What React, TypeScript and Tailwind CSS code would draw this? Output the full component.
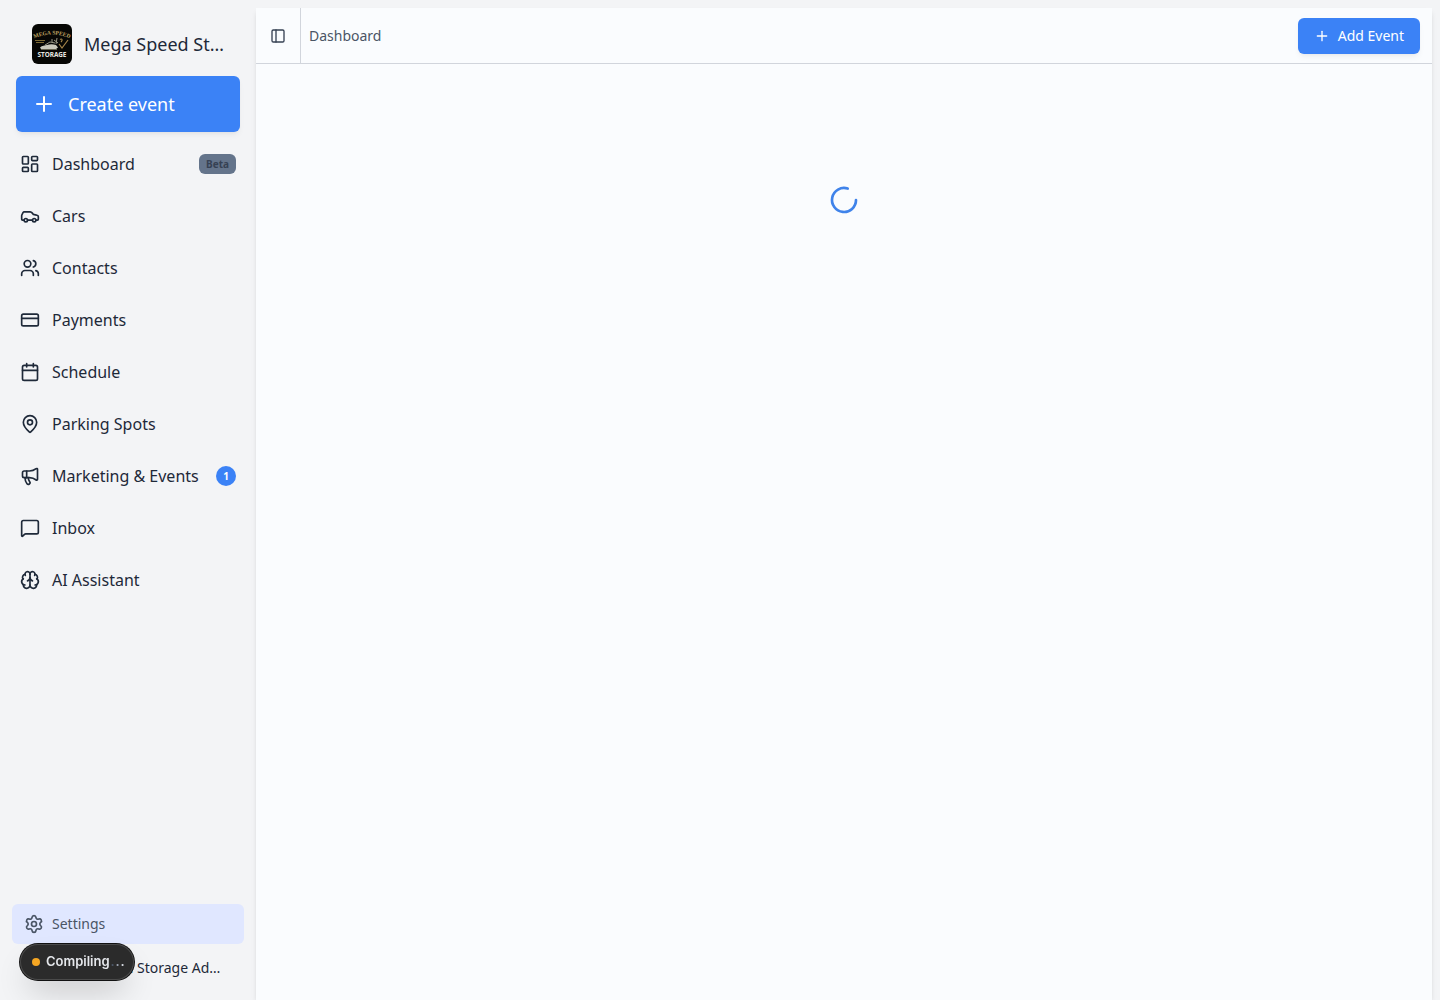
import {
  Brain,
  Calendar,
  Car,
  CreditCard,
  LayoutDashboard,
  MapPin,
  Megaphone,
  MessageSquare,
  PanelLeft,
  Plus,
  Settings,
  Users,
  type LucideIcon,
} from "lucide-react";

interface NavItem {
  label: string;
  icon: LucideIcon;
  href: string;
  tag?: string;
  count?: number;
}

const NAV_ITEMS: NavItem[] = [
  { label: "Dashboard", icon: LayoutDashboard, href: "#dashboard", tag: "Beta" },
  { label: "Cars", icon: Car, href: "#cars" },
  { label: "Contacts", icon: Users, href: "#contacts" },
  { label: "Payments", icon: CreditCard, href: "#payments" },
  { label: "Schedule", icon: Calendar, href: "#schedule" },
  { label: "Parking Spots", icon: MapPin, href: "#parking-spots" },
  { label: "Marketing & Events", icon: Megaphone, href: "#marketing", count: 1 },
  { label: "Inbox", icon: MessageSquare, href: "#inbox" },
  { label: "AI Assistant", icon: Brain, href: "#assistant" },
];

function Logo() {
  return (
    <svg viewBox="0 0 40 40" className="size-10 shrink-0 rounded-md" role="img" aria-label="Mega Speed Storage">
      <rect width="40" height="40" fill="#070705" />
      <path id="logo-arc" d="M1 15 Q20 6 39 15" fill="none" />
      <text fontFamily="Liberation Serif, serif" fontSize="5.6" fontWeight="700" fill="#c2a766" textAnchor="middle">
        <textPath href="#logo-arc" startOffset="50%">
          MEGA SPEED
        </textPath>
      </text>
      <path d="M3 16.5h10M4 18.5h8" stroke="#7d6a35" strokeWidth="1.2" />
      <path d="M8 23.5c2-2 5-2 7-2.5 3-1 6-1 9 0l2 2.5-2 1.5H9z" fill="#c9c7ba" />
      <path d="M13 21l5-3 5 1M20 18v-3M24 20l1-6M22 16l4 3" stroke="#989684" strokeWidth="1" fill="none" />
      <path d="M28 15.5c2-1.5 3 .5 1 2.5M27 20l3 4 6-8" stroke="#a48449" strokeWidth="1.2" fill="none" />
      <path d="M9 25.5h16" stroke="#65624f" strokeWidth="1" />
      <text
        x="20"
        y="33"
        fontFamily="Noto Sans, sans-serif"
        fontSize="6.4"
        fontWeight="700"
        fill="#e9e8e2"
        textAnchor="middle"
      >
        STORAGE
      </text>
    </svg>
  );
}

function NavLink({ item }: { item: NavItem }) {
  const Icon = item.icon;

  return (
    <a href={item.href} className="flex h-10 items-center gap-3 rounded-md px-2 hover:bg-indigo-100">
      <Icon className="size-5 shrink-0" />
      <span className="flex-1 whitespace-nowrap">{item.label}</span>
      {item.tag && (
        <span className="flex h-5 items-center rounded-md bg-[#64748b] px-[7px] text-[10px] font-bold text-gray-700">
          {item.tag}
        </span>
      )}
      {item.count !== undefined && (
        <span className="flex size-5 items-center justify-center rounded-full bg-[#3b82f6] text-[10px] font-bold text-white">
          {item.count}
        </span>
      )}
    </a>
  );
}

function Sidebar() {
  return (
    <aside className="flex w-64 shrink-0 flex-col text-gray-800">
      <div className="flex items-center gap-3 px-8 pt-6">
        <Logo />
        <span className="truncate text-lg">Mega Speed Storage</span>
      </div>

      <div className="px-4 pt-3">
        <button
          type="button"
          className="flex h-14 w-full items-center gap-3 rounded-md bg-[#3b82f6] px-4 text-lg text-white shadow-md shadow-black/5"
        >
          <Plus className="size-6" />
          Create event
        </button>
      </div>

      <nav className="flex flex-col gap-3 px-3 pt-3">
        {NAV_ITEMS.map((item) => (
          <NavLink key={item.label} item={item} />
        ))}
      </nav>

      <div className="mt-auto flex flex-col px-3 pb-3">
        <a href="#settings" className="flex h-10 items-center gap-2 rounded-md bg-indigo-100 px-3 text-sm text-gray-600">
          <Settings className="size-5" />
          Settings
        </a>
        <button type="button" className="mt-1 flex h-10 items-center gap-2 rounded-md pr-4 pl-3 text-sm">
          <span className="size-5 shrink-0 rounded-full bg-gray-300" />
          <span className="truncate">Mega Speed Storage Admin</span>
        </button>
      </div>
    </aside>
  );
}

// dev server status pill, floats over the bottom of the sidebar
function CompileStatus() {
  return (
    <div
      role="status"
      className="fixed bottom-5 left-5 flex h-9 items-center rounded-full bg-[#2b2b2b] pr-2 pl-3 font-['Inter',sans-serif] text-[13px] font-semibold text-gray-200 shadow-[0_0_0_1px_#111,inset_0_0_0_1px_#4a4a4a,0_16px_32px_-8px_rgba(0,0,0,0.24)]"
    >
      <span className="mr-1.5 size-2 rounded-full bg-[#f5a623]" />
      <span className="mr-px">Compiling</span>
      <span className="w-[5px] text-gray-600">.</span>
      <span className="w-[5px] text-gray-400">.</span>
      <span className="w-[5px] text-gray-300">.</span>
    </div>
  );
}

export default function App() {
  return (
    <div className="flex min-h-screen bg-[#f3f4f6] font-['Noto_Sans',sans-serif]">
      <Sidebar />

      <div className="mt-2 mr-2 flex min-w-0 flex-1 flex-col bg-[#fafcfe] shadow-md">
        <header className="flex h-14 items-center border-b border-gray-300 pr-3">
          <div className="flex w-[45px] items-center justify-center self-stretch border-r border-gray-300">
            <button type="button" aria-label="Toggle sidebar" className="text-gray-700">
              <PanelLeft className="size-4" />
            </button>
          </div>
          <span className="px-2 text-sm text-gray-600">Dashboard</span>
          <button
            type="button"
            className="ml-auto flex h-9 items-center gap-2 rounded-md bg-[#3b82f6] px-4 text-sm text-white shadow-md shadow-black/5"
          >
            <Plus className="size-4" />
            Add Event
          </button>
        </header>

        <main className="flex justify-center pt-30">
          <svg viewBox="0 0 24 24" className="size-8" role="img" aria-label="Loading">
            <path
              d="M21 12a9 9 0 1 1-6.219-8.56"
              fill="none"
              stroke="#3f83ea"
              strokeWidth="2"
              strokeLinecap="round"
            />
          </svg>
        </main>
      </div>

      <CompileStatus />
    </div>
  );
}
